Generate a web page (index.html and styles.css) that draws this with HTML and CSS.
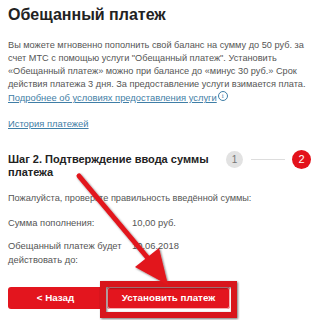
FILE: index.html
```html
<!DOCTYPE HTML>
<html lang="ru">
<head>
	<meta charset="UTF-8">
	<title>Обещанный платеж</title>
	<link rel="stylesheet" href="styles.css">
</head>
<body>
	<div id="page">
		<h1 class="title">Обещанный платеж</h1>

		<p class="intro">Вы можете мгновенно пополнить свой баланс на сумму до 50 руб. за счет МТС с помощью услуги "Обещанный платеж". Установить «Обещанный платеж» можно при балансе до «минус 30 руб.» Срок действия платежа 3 дня. За предоставление услуги взимается плата.</p>

		<p class="more"><a href="#">Подробнее об условиях предоставления услуги</a><span class="info">i</span></p>

		<p class="history"><a href="#">История платежей</a></p>

		<div class="step">
			<h2 class="step-title">Шаг 2. Подтверждение ввода суммы платежа</h2>
			<div class="steps">
				<span class="dot">1</span>
				<span class="line"></span>
				<span class="dot active">2</span>
			</div>
		</div>

		<p class="check">Пожалуйста, проверьте правильность введённой суммы:</p>

		<div class="row">
			<span class="label">Сумма пополнения:</span>
			<span class="value">10,00 руб.</span>
		</div>
		<div class="row">
			<span class="label">Обещанный платеж будет действовать до:</span>
			<span class="value">10.06.2018</span>
		</div>

		<div class="buttons">
			<a class="btn" href="#">&lt; Назад</a>
			<a class="btn btn-main" href="#">Установить платеж</a>
		</div>
	</div>

	<!-- annotation: arrow and frame drawn over the page -->
	<svg class="overlay" width="319" height="320" viewBox="0 0 319 320">
		<defs>
			<filter id="shade" x="-20%" y="-20%" width="140%" height="140%">
				<feDropShadow dx="1" dy="1" stdDeviation="1.2" flood-color="#000" flood-opacity="0.55"/>
			</filter>
		</defs>
		<g filter="url(#shade)">
			<rect x="103" y="284" width="131" height="31" fill="none" stroke="#d8141c" stroke-width="6"/>
			<line x1="79" y1="176" x2="152" y2="263" stroke="#e2141c" stroke-width="5" stroke-linecap="round"/>
			<polygon points="168,285 135,267 159,248" fill="#e2141c"/>
		</g>
	</svg>
</body>
</html>
```

FILE: styles.css
```css
body, html {
	margin: 0;
	padding: 0;
	background: #fff;
	font-family: "Liberation Sans", Arial, sans-serif;
	color: #555;
}

#page {
	width: 303px;
	padding: 5px 8px 0;
	display: flex;
	flex-direction: column;
}

.title {
	font-size: 16px;
	font-weight: bold;
	color: #222;
	margin: 0 0 14px;
	line-height: 20px;
}

.intro {
	font-size: 9.2px;
	line-height: 13px;
	margin: 0;
}

a {
	color: #3f7ea6;
}

.more, .history {
	font-size: 9.4px;
	line-height: 13px;
	margin: 0;
}

.info {
	display: inline-block;
	width: 8px;
	height: 8px;
	border: 1px solid #3f7ea6;
	border-radius: 50%;
	font-size: 7px;
	line-height: 8px;
	text-align: center;
	color: #3f7ea6;
	font-family: "Liberation Serif", serif;
	vertical-align: 3px;
	margin-left: 1px;
}

.history {
	margin-top: 13px;
}

.step {
	display: flex;
	justify-content: space-between;
	align-items: flex-start;
	margin-top: 23px;
}

.step-title {
	width: 215px;
	font-size: 11px;
	line-height: 13px;
	color: #222;
	margin: 0;
}

.steps {
	display: flex;
	align-items: center;
	margin-top: -3px;
}

.dot {
	width: 17px;
	height: 17px;
	border-radius: 50%;
	background: #e2e2e2;
	color: #777;
	font-size: 10px;
	line-height: 17px;
	text-align: center;
}

.dot.active {
	width: 19px;
	height: 19px;
	line-height: 19px;
	background: #e3121b;
	color: #fff;
	font-size: 11px;
}

.line {
	width: 34px;
	height: 1px;
	background: #ddd;
	margin: 0 7px 0 8px;
}

.check {
	font-size: 9.2px;
	line-height: 13px;
	margin: 13px 0 0;
}

.row {
	display: flex;
	font-size: 9.4px;
	line-height: 14px;
	margin-top: 11px;
}

.row + .row {
	margin-top: 9px;
}

.label {
	width: 124px;
}

.buttons {
	display: flex;
	gap: 4px;
	margin-top: 20px;
}

.btn {
	display: block;
	width: 95px;
	height: 22px;
	line-height: 22px;
	background: #e3151e;
	border-radius: 3px;
	color: #fff;
	font-size: 9.8px;
	font-weight: bold;
	text-align: center;
	text-decoration: none;
}

.btn-main {
	width: 123px;
	box-shadow: inset 0 0 0 1px #f4b0b3;
}

.overlay {
	position: absolute;
	left: 0;
	top: 0;
}
```
